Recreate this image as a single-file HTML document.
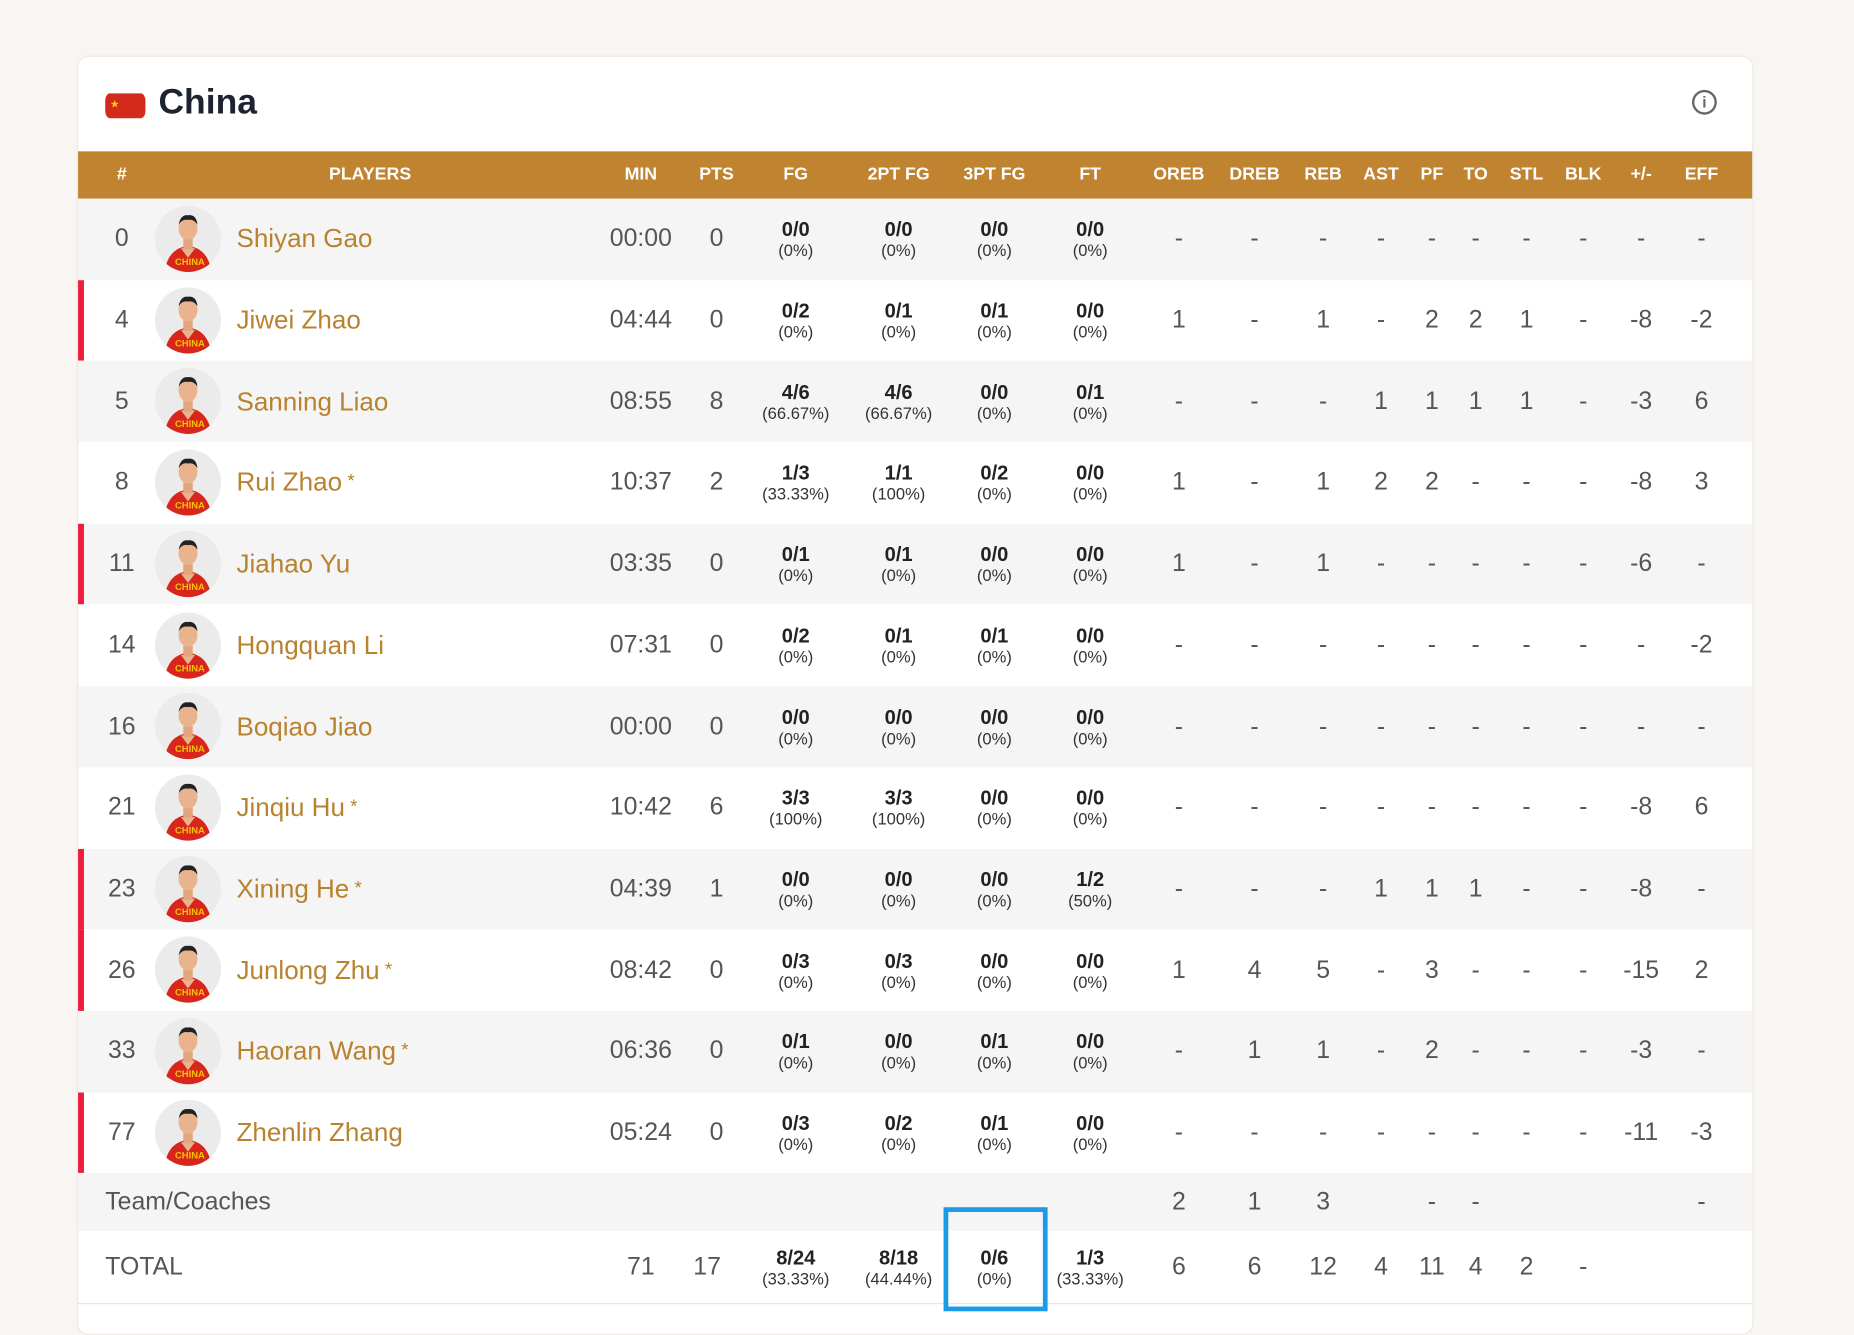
<!DOCTYPE html>
<html><head><meta charset="utf-8"><style>
html,body{margin:0;padding:0;background:#f9f5f2;}
body{width:1854px;height:1312px;overflow:hidden;position:relative;}
#w{position:absolute;left:0;top:0;width:1568px;height:1110px;transform:scale(1.1824);transform-origin:0 0;font-family:"Liberation Sans Narrow","Liberation Sans",sans-serif;}
.card{position:absolute;left:65px;top:47px;width:1416px;height:1080px;background:#fff;border:1px solid #ece8e4;border-radius:10px;overflow:hidden;}
.title{position:absolute;left:68px;top:22px;font:bold 30px "Liberation Sans",sans-serif;color:#1e2330;}
.flag{position:absolute;left:23px;top:31px;width:34px;height:21px;background:#d42a1e;border-radius:4px/6px;}
.info{position:absolute;left:1365px;top:28px;width:21px;height:21px;border:2px solid #666;border-radius:50%;box-sizing:border-box;font:bold 13px "Liberation Sans";color:#666;text-align:center;line-height:17px;}
.hdr{position:absolute;left:0;top:80px;width:1416px;height:40px;background:#c0832f;}
.h{position:absolute;top:0;color:#fff;font:bold 15px "Liberation Sans",sans-serif;line-height:40px;transform:translateX(-50%);white-space:nowrap;}
.row{position:absolute;left:0;width:1416px;}
.g{background:#f5f5f5}
.red{position:absolute;left:0;top:0;width:5px;height:100%;background:#ee1d3c;}
.c{position:absolute;transform:translate(-50%,-50%);top:50%;color:#555;font-size:21px;white-space:nowrap;text-align:center;}
.s{position:absolute;transform:translate(-50%,-50%);top:50%;text-align:center;white-space:nowrap;}
.s b{display:block;font:bold 17px "Liberation Sans",sans-serif;line-height:19px;color:#222;}
.s i{display:block;font-style:normal;font-size:14px;color:#333;line-height:16px;}
.nm{position:absolute;left:134px;top:50%;transform:translateY(-50%);color:#b8822f;font-size:22px;white-space:nowrap;}
.av{position:absolute;left:65px;top:6px;}
</style></head><body><div id="w">
<div class="card">
<div class="flag"></div><div style="position:absolute;left:27px;top:35px;color:#ffd400;font-size:9px">★</div>
<div class="title">China</div>
<div class="info">i</div>
<div class="hdr">
<div class="h" style="left:37px">#</div><div class="h" style="left:247px">PLAYERS</div>
<div class="h" style="left:476px">MIN</div><div class="h" style="left:540px">PTS</div><div class="h" style="left:607px">FG</div><div class="h" style="left:694px">2PT FG</div><div class="h" style="left:775px">3PT FG</div><div class="h" style="left:856px">FT</div><div class="h" style="left:931px">OREB</div><div class="h" style="left:995px">DREB</div><div class="h" style="left:1053px">REB</div><div class="h" style="left:1102px">AST</div><div class="h" style="left:1145px">PF</div><div class="h" style="left:1182px">TO</div><div class="h" style="left:1225px">STL</div><div class="h" style="left:1273px">BLK</div><div class="h" style="left:1322px">+/-</div><div class="h" style="left:1373px">EFF</div>
</div>
<div id="rows"></div>
<div style="position:absolute;left:732px;top:973px;width:80px;height:80px;border:4px solid #1a9be8;"></div>
</div>
</div>
<script>
var d=[
[0,"Shiyan Gao","",0,"00:00",0,"0/0","0%","0/0","0%","0/0","0%","0/0","0%","-","-","-","-","-","-","-","-","-","-"],
[4,"Jiwei Zhao","",1,"04:44",0,"0/2","0%","0/1","0%","0/1","0%","0/0","0%","1","-","1","-","2","2","1","-","-8","-2"],
[5,"Sanning Liao","",0,"08:55",8,"4/6","66.67%","4/6","66.67%","0/0","0%","0/1","0%","-","-","-","1","1","1","1","-","-3","6"],
[8,"Rui Zhao"," *",0,"10:37",2,"1/3","33.33%","1/1","100%","0/2","0%","0/0","0%","1","-","1","2","2","-","-","-","-8","3"],
[11,"Jiahao Yu","",1,"03:35",0,"0/1","0%","0/1","0%","0/0","0%","0/0","0%","1","-","1","-","-","-","-","-","-6","-"],
[14,"Hongquan Li","",0,"07:31",0,"0/2","0%","0/1","0%","0/1","0%","0/0","0%","-","-","-","-","-","-","-","-","-","-2"],
[16,"Boqiao Jiao","",0,"00:00",0,"0/0","0%","0/0","0%","0/0","0%","0/0","0%","-","-","-","-","-","-","-","-","-","-"],
[21,"Jinqiu Hu"," *",0,"10:42",6,"3/3","100%","3/3","100%","0/0","0%","0/0","0%","-","-","-","-","-","-","-","-","-8","6"],
[23,"Xining He"," *",1,"04:39",1,"0/0","0%","0/0","0%","0/0","0%","1/2","50%","-","-","-","1","1","1","-","-","-8","-"],
[26,"Junlong Zhu"," *",1,"08:42",0,"0/3","0%","0/3","0%","0/0","0%","0/0","0%","1","4","5","-","3","-","-","-","-15","2"],
[33,"Haoran Wang"," *",0,"06:36",0,"0/1","0%","0/0","0%","0/1","0%","0/0","0%","-","1","1","-","2","-","-","-","-3","-"],
[77,"Zhenlin Zhang","",1,"05:24",0,"0/3","0%","0/2","0%","0/1","0%","0/0","0%","-","-","-","-","-","-","-","-","-11","-3"]];
var sx=[607,694,775,856],cx=[931,995,1053,1102,1145,1182,1225,1273,1322,1373];
var av='<svg class="av" width="56" height="56" viewBox="0 0 56 56"><defs><clipPath id="k"><circle cx="28" cy="28" r="28"/></clipPath></defs><g clip-path="url(#k)"><rect width="56" height="56" fill="#ebebeb"/><path d="M8 58 Q10 36 28 34 Q46 36 48 58Z" fill="#d8261c"/><path d="M22 36 L28 44 L34 36" fill="#e9b38e"/><rect x="24" y="28" width="8" height="9" fill="#e2a57c"/><ellipse cx="28" cy="19" rx="8" ry="10" fill="#e9b38e"/><path d="M20 16 Q22 7 28 8 Q35 7 36 16 Q33 11 28 12 Q23 11 20 16Z" fill="#222"/><text x="17" y="50" font-size="8" font-weight="bold" fill="#f5c400" font-family="Liberation Sans">CHINA</text></g></svg>';
var h='',y0=120,rh=68.7;
d.forEach(function(r,i){
h+='<div class="row'+(i%2==0?' g':'')+'" style="top:'+(y0+i*rh)+'px;height:'+rh+'px">'+(r[3]?'<div class="red"></div>':'')+
'<div class="c" style="left:37px">'+r[0]+'</div>'+av+'<div class="nm">'+r[1]+'<span style="font-size:16px;vertical-align:3px">'+r[2]+'</span></div>'+
'<div class="c" style="left:476px">'+r[4]+'</div><div class="c" style="left:540px">'+r[5]+'</div>';
for(var j=0;j<4;j++)h+='<div class="s" style="left:'+sx[j]+'px"><b>'+r[6+j*2]+'</b><i>('+r[7+j*2]+')</i></div>';
for(var j=0;j<10;j++)h+='<div class="c" style="left:'+cx[j]+'px">'+r[14+j]+'</div>';
h+='</div>';});
var t=y0+12*rh;
h+='<div class="row g" style="top:'+t+'px;height:49px"><div class="c" style="left:23px;transform:translateY(-50%)">Team/Coaches</div>';
['2','1','3','','-','-','','','','-'].forEach(function(v,j){if(v)h+='<div class="c" style="left:'+cx[j]+'px">'+v+'</div>';});
h+='</div><div class="row" style="top:'+(t+49)+'px;height:61px;border-bottom:1px solid #e6e6e6"><div class="c" style="left:23px;transform:translateY(-50%)">TOTAL</div><div class="c" style="left:476px">71</div><div class="c" style="left:532px">17</div>';
[['8/24','33.33%'],['8/18','44.44%'],['0/6','0%'],['1/3','33.33%']].forEach(function(v,j){h+='<div class="s" style="left:'+sx[j]+'px"><b>'+v[0]+'</b><i>('+v[1]+')</i></div>';});
['6','6','12','4','11','4','2','-'].forEach(function(v,j){h+='<div class="c" style="left:'+cx[j]+'px">'+v+'</div>';});
h+='</div>';
document.getElementById('rows').innerHTML=h;
</script>
</body></html>
